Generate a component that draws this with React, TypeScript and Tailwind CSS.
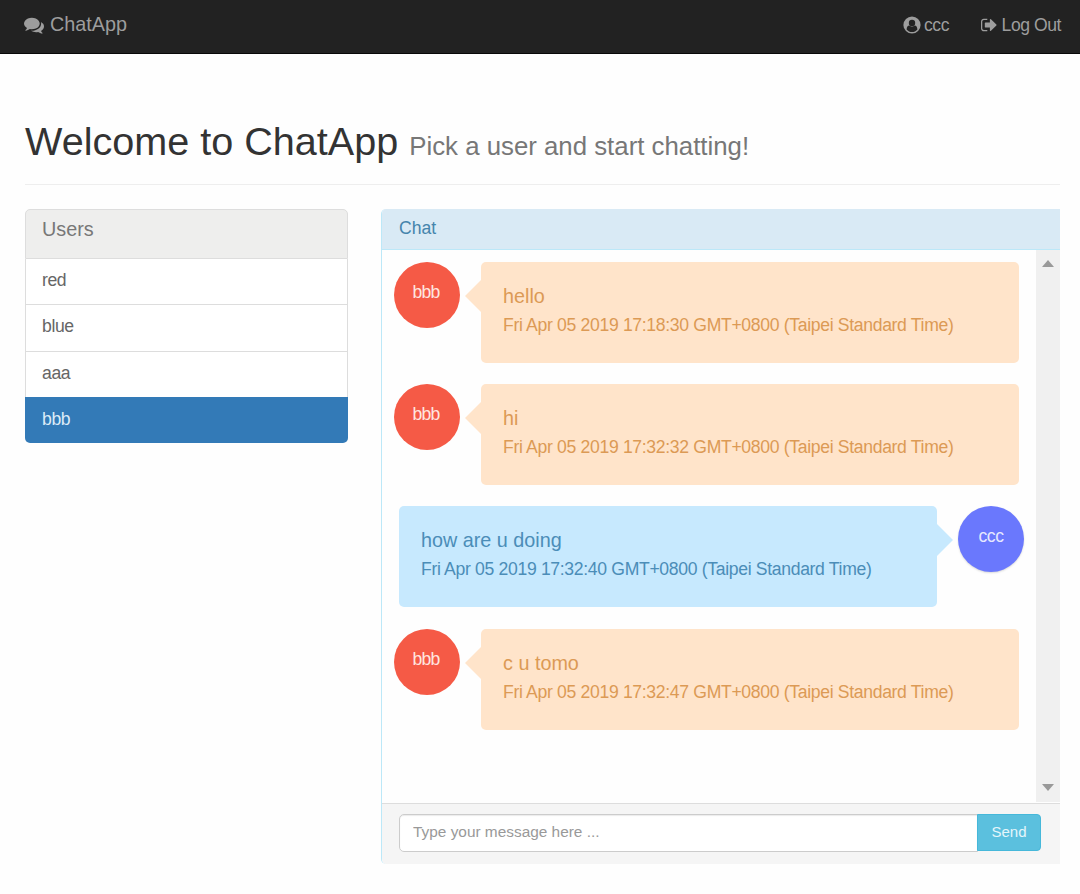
const messages = [
  { from: "bbb", text: "hello", time: "Fri Apr 05 2019 17:18:30 GMT+0800 (Taipei Standard Time)", own: false },
  { from: "bbb", text: "hi", time: "Fri Apr 05 2019 17:32:32 GMT+0800 (Taipei Standard Time)", own: false },
  { from: "ccc", text: "how are u doing", time: "Fri Apr 05 2019 17:32:40 GMT+0800 (Taipei Standard Time)", own: true },
  { from: "bbb", text: "c u tomo", time: "Fri Apr 05 2019 17:32:47 GMT+0800 (Taipei Standard Time)", own: false },
];

const users = ["red", "blue", "aaa", "bbb"];
const activeUser = "bbb";

function CommentsIcon() {
  return (
    <svg viewBox="0 0 1792 1792" className="size-5 fill-current" aria-hidden="true">
      <path d="M1408 768q0 139-94 257t-256.5 186.5-353.5 68.5q-86 0-176-16-124 88-278 128-36 9-86 16h-3q-11 0-20.5-8t-11.5-21q-1-3-1-6.5t.5-6.5 2-6l2.5-5 3.5-5.5 4-5 4.5-5 4-4.5q5-6 23-25t26-29.5 22.5-29 25-38.5 20.5-44q-124-72-195-177t-71-224q0-139 94-257t256.5-186.5 353.5-68.5 353.5 68.5 256.5 186.5 94 257zm384 256q0 120-71 224.5t-195 176.5q10 24 20.5 44t25 38.5 22.5 29 26 29.5 23 25q1 1 4 4.5t4.5 5 4 5 3.5 5.5l2.5 5 2 6 .5 6.5-1 6.5q-3 14-13 22t-22 7q-50-7-86-16-154-40-278-128-90 16-176 16-271 0-472-132 58 4 88 4 161 0 309-45t264-129q125-92 192-212t67-254q0-77-23-152 129 71 204 178t75 230z" />
    </svg>
  );
}

function UserIcon() {
  return (
    <svg viewBox="0 0 18 18" className="size-[18px]" aria-hidden="true">
      <circle cx="9" cy="9" r="8.6" fill="currentColor" />
      <g fill="#222">
        <circle cx="9" cy="6.9" r="3.2" />
        <path d="M3.6 13.4C3.8 11.2 4.7 9.7 6.3 9.6C7.9 10.9 10.1 10.9 11.7 9.6C13.3 9.7 14.2 11.2 14.4 13.4C11.8 16.8 6.2 16.8 3.6 13.4Z" />
      </g>
    </svg>
  );
}

function SignOutIcon() {
  return (
    <svg viewBox="0 0 1664 1792" className="h-[18px] w-[16.5px] fill-current" aria-hidden="true">
      <path d="M640 1440q0 4 1 20t.5 26.5-3 23.5-10 19.5-20.5 6.5h-320q-119 0-203.500-84.500t-84.500-203.500v-704q0-119 84.500-203.500t203.500-84.500h320q13 0 22.500 9.500t9.500 22.500q0 4 1 20t.5 26.500-3 23.500-10 19.500-20.500 6.500h-320q-66 0-113 47t-47 113v704q0 66 47 113t113 47h312l11.500 1 11.500 3 8 5.500 7 9 2 13.500zm928-544q0 26-19 45l-544 544q-19 19-45 19t-45-19-19-45v-288h-448q-26 0-45-19t-19-45v-384q0-26 19-45t45-19h448v-288q0-26 19-45t45-19 45 19l544 544q19 19 19 45z" />
    </svg>
  );
}

function Message({ from, text, time, own }: (typeof messages)[number]) {
  return (
    <li className={own ? "flex flex-row-reverse justify-end gap-[21px] pl-[17px]" : "flex gap-[21px] pl-3"}>
      <div
        className={
          own
            ? "size-[66px] shrink-0 rounded-full bg-[#6a78fd] pt-[18px] text-center text-[17.6px] leading-6 tracking-[-0.4px] text-[#e6e8ff] shadow-[0_1px_2px_rgba(0,0,0,0.15)]"
            : "size-[66px] shrink-0 rounded-full bg-[#f55a46] pt-[18px] pr-[2px] text-center text-[17.6px] leading-6 tracking-[-0.8px] text-[#ffe6e0]"
        }
      >
        {from}
      </div>
      <div
        className={
          own
            ? "relative h-[101px] w-[538px] rounded-[5px] bg-[#c7e9fe] px-[22px] pt-[21px] text-[#4b8db8]"
            : "relative h-[101px] w-[538px] rounded-[5px] bg-[#ffe4ca] px-[22px] pt-[21px] text-[#dc9a55]"
        }
      >
        <svg
          viewBox="0 0 17 34"
          className={
            own
              ? "absolute top-[17px] left-[537px] h-[34px] w-[17px] fill-[#c7e9fe]"
              : "absolute top-[17px] left-[-16px] h-[34px] w-[17px] fill-[#ffe4ca]"
          }
          aria-hidden="true"
        >
          <path d={own ? "M0 0L17 17L0 34Z" : "M17 0L0 17L17 34Z"} />
        </svg>
        <p className="text-[19.8px] leading-[27px]">{text}</p>
        <p className="mt-[2px] text-[17.6px] leading-[26px] tracking-[-0.33px] whitespace-nowrap">{time}</p>
      </div>
    </li>
  );
}

export default function App() {
  return (
    <div className="h-[894px] w-[1080px] overflow-hidden bg-[#fefefe] font-['Liberation_Sans',Arial,sans-serif] text-[#333]">
      <nav className="flex h-[54px] items-center justify-between border-b border-[#080808] bg-[#222] pr-[19px] pb-[3px] pl-6 text-[#9d9d9d]">
        <a className="flex items-center gap-[6px] text-[19.8px]">
          <CommentsIcon />
          <span>ChatApp</span>
        </a>
        <div className="flex items-center gap-8 pt-px text-[17.6px] tracking-[-0.45px]">
          <a className="flex items-center gap-[3px]">
            <UserIcon />
            <span>ccc</span>
          </a>
          <a className="flex items-center gap-1">
            <SignOutIcon />
            <span>Log Out</span>
          </a>
        </div>
      </nav>

      <main className="pr-5 pl-[25px]">
        <header className="h-[131px] border-b border-[#eee] pt-[65px]">
          <h1 className="flex items-baseline gap-[11px] text-[39.6px] leading-[44px]">
            Welcome to ChatApp
            <small className="text-[25.8px] text-[#777]">Pick a user and start chatting!</small>
          </h1>
        </header>

        <div className="mt-6 flex items-start gap-[33px]">
          <aside className="w-[323px] shrink-0">
            <h4 className="h-[50px] rounded-t-[5px] border border-[#ddd] bg-[#eeeeed] px-4 pt-[6px] text-[19.8px] leading-[26px] text-[#777]">Users</h4>
            <ul>
              {users.map((user) => (
                <li
                  key={user}
                  className={
                    user === activeUser
                      ? "-mt-px h-[46.4px] rounded-b-[5px] bg-[#337ab7] px-[17px] pt-[10px] text-[17.6px] leading-6 tracking-[-0.4px] text-[#dcebf7]"
                      : "h-[46.25px] border-x border-b border-[#ddd] bg-white px-4 pt-[9px] text-[17.6px] leading-6 tracking-[-0.4px] text-[#666]"
                  }
                >
                  {user}
                </li>
              ))}
            </ul>
          </aside>

          <section className="flex h-[655px] min-w-0 flex-1 flex-col overflow-hidden rounded-l-[5px] border-l border-[#bce8f8] bg-[#fefefe]">
            <h2 className="h-[41px] shrink-0 border-b border-[#bce8f8] bg-[#d9eaf5] px-[17px] pt-[7px] text-[17.6px] leading-6 text-[#4585ac]">Chat</h2>
            <div className="flex h-[553px] shrink-0">
              <ul className="flex flex-1 flex-col gap-[21.4px] pt-[11.7px]">
                {messages.map((message) => (
                  <Message key={message.time} {...message} />
                ))}
              </ul>
              <div className="mb-px flex w-6 flex-col items-center justify-between bg-[#f0f0f0] pt-[10px] pb-[11px]">
                <svg viewBox="0 0 12 7" className="h-[7px] w-3 fill-[#999]" aria-hidden="true">
                  <path d="M6 0L12 7H0Z" />
                </svg>
                <svg viewBox="0 0 12 7" className="h-[7px] w-3 fill-[#999]" aria-hidden="true">
                  <path d="M0 0H12L6 7Z" />
                </svg>
              </div>
            </div>
            <form className="flex flex-1 border-t border-[#ddd] bg-[#f5f5f5] px-[17px] pt-[10px] text-[15.4px]">
              <input
                placeholder="Type your message here ..."
                className="h-[38px] w-[579px] rounded-l-[5px] border border-[#ccc] bg-white px-[13px] pb-[2px] shadow-[inset_0_1px_1px_rgba(0,0,0,0.08)] outline-none placeholder:text-[#999]"
              />
              <button type="button" className="-ml-px h-[37px] w-16 rounded-r-[4px] border border-[#46b8da] bg-[#5bc0de] text-[15px] text-[#e4f6fb]">
                Send
              </button>
            </form>
          </section>
        </div>
      </main>
    </div>
  );
}
